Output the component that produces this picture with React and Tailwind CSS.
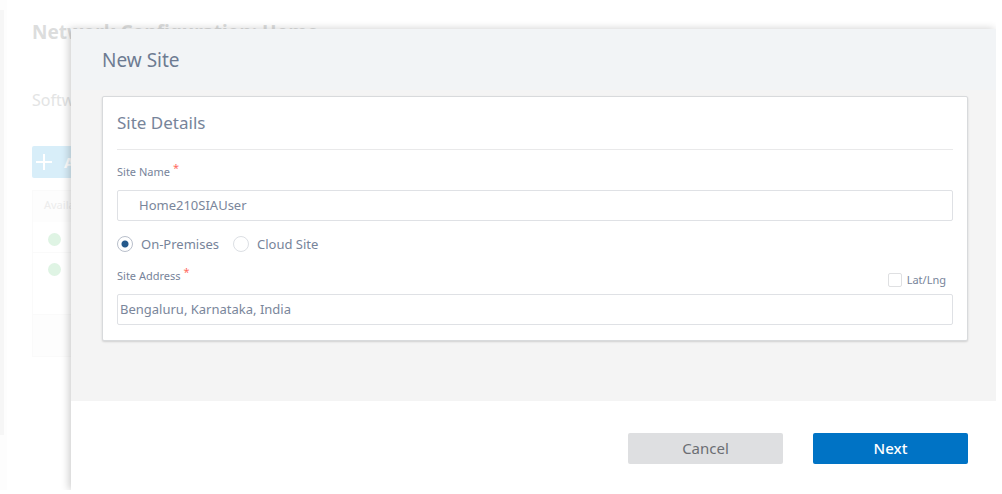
import { useState } from "react";

function FieldLabel({ htmlFor, children }) {
  return (
    <label htmlFor={htmlFor} className="flex text-[11px] leading-4">
      {children}
      <span className="-mt-1 ml-[3px] text-[#ff6b60]">*</span>
    </label>
  );
}

function RadioOption({ label, value, selected, onSelect }) {
  return (
    <label className="flex items-center gap-2 text-[13px] leading-4">
      <input
        type="radio"
        name="siteType"
        value={value}
        checked={selected}
        onChange={() => onSelect(value)}
        className="size-4 appearance-none rounded-full border border-[#dcdfe4] bg-white bg-no-repeat checked:border-[#b9bfcb] checked:bg-[radial-gradient(circle,#265a8c_0,#265a8c_3px,transparent_4px)]"
      />
      {label}
    </label>
  );
}

function StatusRow({ className }) {
  return (
    <div className={"border-b border-[#fafafa] pl-[15px] " + className}>
      <span className="block size-[13px] rounded-full bg-[#dff4e4]" />
    </div>
  );
}

function ConfigurationPage() {
  return (
    <div className="flex min-h-full">
      <div className="w-[7px] shrink-0 bg-[#fdfdfd] pt-[10px]">
        <div className="h-[425px] w-1 bg-[#f6f6f6]" />
      </div>
      <main className="min-w-0 flex-1 pt-[18px] pl-[25px]">
        <h1 className="text-[19px] leading-7 font-bold text-[#dcdddd]">Network Configuration: Home</h1>
        <p className="mt-[42px] text-base leading-6 text-[#e3e4e4]">Software</p>
        <div className="mt-[34px] flex h-8 w-24 items-center rounded-xs bg-[#d8eef9] pl-1 text-[15px] font-bold text-white">
          <svg viewBox="0 0 16 16" className="mr-3 size-4" fill="none" stroke="currentColor" strokeWidth="2">
            <path d="M8 0v16M0 8h16" />
          </svg>
          Add
        </div>
        <section className="mt-3 border border-[#fafafa]">
          <div className="h-[31px] bg-[#fdfdfd] pt-[6px] pl-[11px] text-[11px] leading-4 text-[#ececec]">Availability</div>
          <StatusRow className="h-[31px] pt-[11px]" />
          <StatusRow className="h-[62px] pt-[10px]" />
          <div className="h-[41px] bg-[#fdfdfd]" />
        </section>
      </main>
    </div>
  );
}

function NewSiteDialog() {
  const [siteType, setSiteType] = useState("premises");
  const [name, setName] = useState("Home210SIAUser");
  const [address, setAddress] = useState("Bengaluru, Karnataka, India");
  const inputClass =
    "block h-[31px] w-full rounded-xs border border-[#dfe1e5] bg-white pb-[2px] text-[13px] leading-5 text-[#7a869b] outline-none";

  return (
    <form
      role="dialog"
      aria-labelledby="dialog-title"
      onSubmit={(e) => e.preventDefault()}
      className="absolute top-[29px] right-0 bottom-0 left-[71px] flex flex-col bg-white text-[#77849a] shadow-[-2px_0_8px_rgba(0,0,0,0.2)]"
    >
      <div className="bg-[linear-gradient(#f2f4f6_61px,#f4f4f4_61px)] px-7 pt-[17px] pb-[60px] pl-[31px]">
        <h2 id="dialog-title" className="text-[19px] leading-7 text-[#6d7b92]">New Site</h2>
        <section className="mt-[22px] rounded-xs border border-[#d8dadc] bg-white px-[14px] pt-3 pb-[15px] shadow-[0_1px_2px_rgba(0,0,0,0.15)]">
          <h3 className="border-b border-[#e9e9ea] pb-3 text-[17px] leading-7">Site Details</h3>
          <div className="mt-[14px] mb-[10px]">
            <FieldLabel htmlFor="site-name">Site Name</FieldLabel>
          </div>
          <input
            id="site-name"
            value={name}
            onChange={(e) => setName(e.target.value)}
            className={inputClass + " px-[21px]"}
          />
          <div className="mt-[15px] flex gap-[14px]">
            <RadioOption label="On-Premises" value="premises" selected={siteType === "premises"} onSelect={setSiteType} />
            <RadioOption label="Cloud Site" value="cloud" selected={siteType === "cloud"} onSelect={setSiteType} />
          </div>
          <div className="mt-4 mb-[6px] flex items-end justify-between pr-[7px]">
            <div className="pb-1">
              <FieldLabel htmlFor="site-address">Site Address</FieldLabel>
            </div>
            <label className="flex items-center gap-[5px] text-[11px] leading-4">
              <input
                type="checkbox"
                className="size-[14px] appearance-none rounded-xs border border-[#dfe0e2] bg-white checked:bg-[#265a8c]"
              />
              Lat/Lng
            </label>
          </div>
          <input
            id="site-address"
            value={address}
            onChange={(e) => setAddress(e.target.value)}
            className={inputClass + " px-[2px]"}
          />
        </section>
      </div>
      <footer className="flex justify-end gap-[30px] pt-8 pr-7">
        <button type="button" className="h-[31px] w-[155px] rounded-xs bg-[#dedfe1] pb-[2px] text-[15px] leading-6 text-[#6b6e73]">
          Cancel
        </button>
        <button type="submit" className="h-[31px] w-[155px] rounded-xs bg-[#0073c5] pb-[2px] text-[15px] leading-6 font-medium text-white">
          Next
        </button>
      </footer>
    </form>
  );
}

export default function App() {
  return (
    <div className="h-screen bg-white pr-[6px] pb-1 font-['Noto_Sans',sans-serif]">
      <div className="relative h-full overflow-hidden">
        <ConfigurationPage />
        <NewSiteDialog />
      </div>
    </div>
  );
}
